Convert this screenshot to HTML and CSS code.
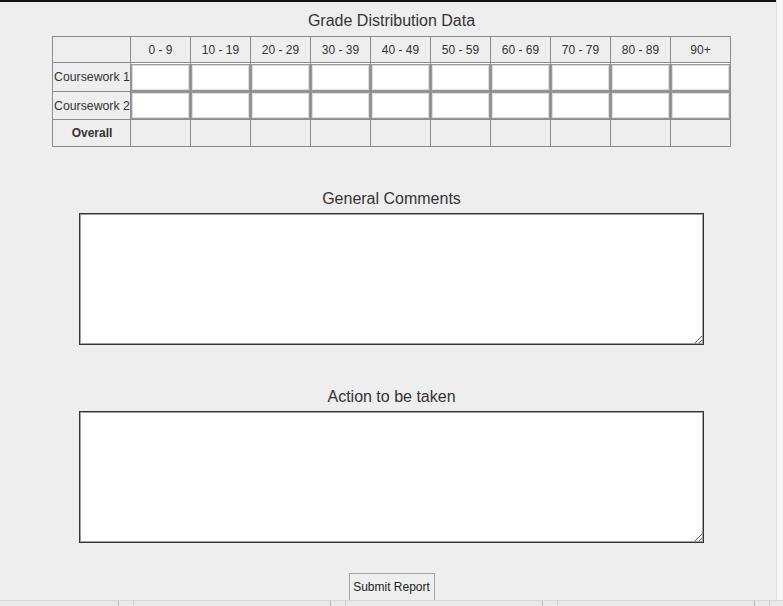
FILE: index.html
```html
<!DOCTYPE html>
<html>
<head>
<meta charset="utf-8">
<link rel="stylesheet" href="styles.css">
</head>
<body>
<div class="window">
  <div class="main">
    <div class="content">
      <h2 class="title">Grade Distribution Data</h2>
      <table class="grid">
        <tr class="head">
          <th class="rowhead"></th>
          <th>0 - 9</th><th>10 - 19</th><th>20 - 29</th><th>30 - 39</th><th>40 - 49</th>
          <th>50 - 59</th><th>60 - 69</th><th>70 - 79</th><th>80 - 89</th><th>90+</th>
        </tr>
        <tr class="r1">
          <td class="rowhead">Coursework 1</td>
          <td class="in"><input></td><td class="in"><input></td><td class="in"><input></td><td class="in"><input></td><td class="in"><input></td>
          <td class="in"><input></td><td class="in"><input></td><td class="in"><input></td><td class="in"><input></td><td class="in"><input></td>
        </tr>
        <tr class="r2">
          <td class="rowhead">Coursework 2</td>
          <td class="in"><input></td><td class="in"><input></td><td class="in"><input></td><td class="in"><input></td><td class="in"><input></td>
          <td class="in"><input></td><td class="in"><input></td><td class="in"><input></td><td class="in"><input></td><td class="in"><input></td>
        </tr>
        <tr class="r3">
          <td class="rowhead overall">Overall</td>
          <td></td><td></td><td></td><td></td><td></td><td></td><td></td><td></td><td></td><td></td>
        </tr>
      </table>

      <div class="block first">
        <h2 class="label">General Comments</h2>
        <textarea class="box"></textarea>
      </div>

      <div class="block">
        <h2 class="label">Action to be taken</h2>
        <textarea class="box"></textarea>
      </div>

      <div class="actions">
        <button class="submit">Submit Report</button>
      </div>
    </div>
  </div>
  <div class="edge"></div>
</div>
<div class="statusbar">
  <span class="seg s1"></span><span class="tick"></span>
  <span class="seg s2"></span><span class="tick"></span>
  <span class="seg s2"></span><span class="tick"></span>
  <span class="seg s2"></span><span class="tick"></span>
  <span class="seg"></span>
</div>
</body>
</html>
```

FILE: styles.css
```css
html, body {
  margin: 0;
  padding: 0;
}
body {
  width: 783px;
  height: 606px;
  overflow: hidden;
  background: #eeeeee;
  font-family: "Liberation Sans", Arial, sans-serif;
  color: #333333;
  display: flex;
  flex-direction: column;
}
.window {
  flex: 1;
  display: flex;
  min-height: 0;
}
.main {
  flex: 1;
  border-top: 2px solid #111111;
  padding-left: 7px;
  overflow: hidden;
}
.edge {
  width: 6px;
  background: #f7f7f7;
  border-left: 1px solid #e2e2e2;
}
.content {
  display: flex;
  flex-direction: column;
  align-items: center;
}
.title, .label {
  margin: 0;
  font-size: 16px;
  font-weight: normal;
  line-height: 18px;
  color: #333333;
}
.title {
  margin-top: 10px;
  margin-bottom: 6px;
}
.grid {
  border-collapse: collapse;
  width: 679px;
  table-layout: fixed;
  font-size: 12px;
}
.grid th, .grid td {
  border: 1px solid #8c8c8c;
  padding: 0;
  font-weight: normal;
  text-align: center;
  color: #333333;
}
.grid .rowhead {
  width: 76px;
  text-align: left;
  padding-left: 1px;
  white-space: nowrap;
  font-size: 12.3px;
}
.grid .overall {
  text-align: center;
  font-weight: bold;
  font-size: 12px;
}
.head { height: 26px; }
.r1 { height: 29px; }
.r2 { height: 28px; }
.r3 { height: 27px; }
.grid td.in {
  background: #ffffff;
}
.grid input {
  display: block;
  box-sizing: border-box;
  width: 100%;
  height: 100%;
  min-height: 27px;
  margin: 0;
  border: 1px solid #9a9a9a;
  box-shadow: inset 0 0 0 1px #dcdcdc;
  background: #ffffff;
  outline: none;
}
.block {
  display: flex;
  flex-direction: column;
  align-items: center;
  margin-top: 43px;
}
.block.first {
  margin-top: 43px;
}
.label {
  margin-bottom: 5px;
}
.box {
  display: block;
  box-sizing: border-box;
  width: 625px;
  height: 132px;
  margin: 0;
  border: 1px solid #333333;
  box-shadow: inset 0 0 0 1px #a0a0a0;
  background: #ffffff;
  outline: none;
}
.actions {
  margin-top: 30px;
}
.submit {
  box-sizing: border-box;
  width: 86px;
  height: 30px;
  margin: 0;
  padding: 0 0 4px 0;
  border: 1px solid #a6a6a6;
  border-bottom: none;
  background: #efefef;
  font-family: "Liberation Sans", Arial, sans-serif;
  font-size: 12px;
  color: #222222;
}
.statusbar {
  height: 5px;
  flex: none;
  display: flex;
  background: #e9e9e9;
  border-top: 1px solid #d6d6d6;
}
.seg {
  flex: none;
  width: 196px;
}
.seg.s1 { width: 118px; }
.seg:last-child { flex: 1; }
.tick {
  flex: none;
  width: 14px;
  border-left: 1px solid #b8b8b8;
  border-right: 1px solid #cfcfcf;
}
```
